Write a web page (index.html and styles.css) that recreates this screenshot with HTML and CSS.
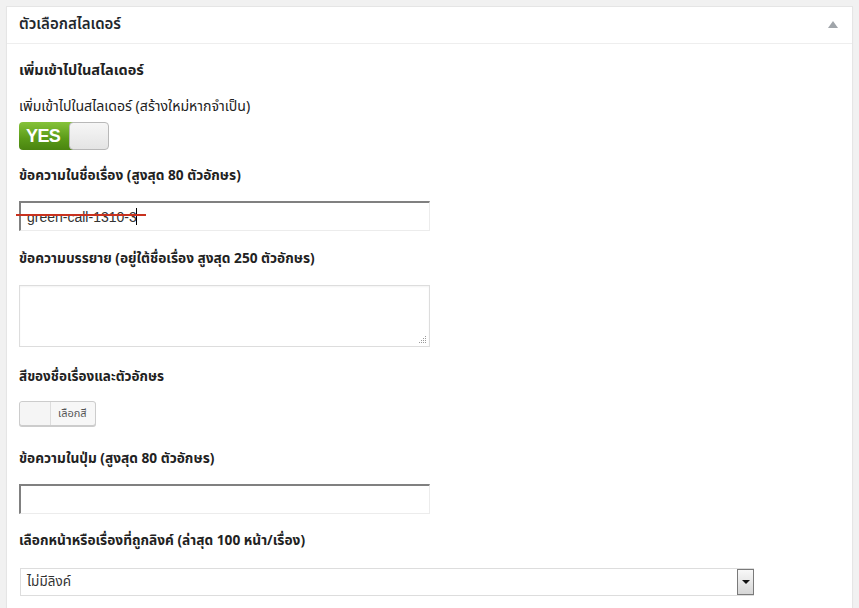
FILE: index.html
```html
<!DOCTYPE html>
<html lang="th">
<head>
<meta charset="utf-8">
<title>ตัวเลือกสไลเดอร์</title>
<link rel="stylesheet" href="styles.css">
</head>
<body>
<div class="panel">
  <div class="panel-head">
    <h2 class="panel-title">ตัวเลือกสไลเดอร์</h2>
    <span class="collapse-arrow"></span>
  </div>
  <div class="panel-body">
    <h3 class="section-title big">เพิ่มเข้าไปในสไลเดอร์</h3>
    <div class="label plain l1">เพิ่มเข้าไปในสไลเดอร์ (สร้างใหม่หากจำเป็น)</div>
    <div class="toggle">
      <span class="toggle-on">YES</span>
      <span class="toggle-handle"></span>
    </div>
    <div class="label l2">ข้อความในชื่อเรื่อง (สูงสุด 80 ตัวอักษร)</div>
    <div class="field-wrap">
      <div class="text-input"><span class="value">green-call-1310-3</span><span class="caret"></span></div>
      <span class="strike"></span>
    </div>
    <div class="label l3">ข้อความบรรยาย (อยู่ใต้ชื่อเรื่อง สูงสุด 250 ตัวอักษร)</div>
    <div class="textarea">
      <svg class="grip" width="8" height="8" viewBox="0 0 8 8"><g fill="#9a9a9a"><rect x="6" y="0" width="1" height="1"/><rect x="4" y="2" width="1" height="1"/><rect x="6" y="2" width="1" height="1"/><rect x="2" y="4" width="1" height="1"/><rect x="4" y="4" width="1" height="1"/><rect x="6" y="4" width="1" height="1"/><rect x="0" y="6" width="1" height="1"/><rect x="2" y="6" width="1" height="1"/><rect x="4" y="6" width="1" height="1"/><rect x="6" y="6" width="1" height="1"/></g></svg>
    </div>
    <h3 class="section-title l4">สีของชื่อเรื่องและตัวอักษร</h3>
    <div class="color-btn"><span class="swatch"></span><span class="color-text">เลือกสี</span></div>
    <div class="label l5">ข้อความในปุ่ม (สูงสุด 80 ตัวอักษร)</div>
    <div class="text-input empty"></div>
    <div class="label l6">เลือกหน้าหรือเรื่องที่ถูกลิงค์ (ล่าสุด 100 หน้า/เรื่อง)</div>
    <div class="select">
      <span class="select-text">ไม่มีลิงค์</span>
      <span class="select-btn"><span class="down"></span></span>
    </div>
  </div>
</div>
</body>
</html>
```
FILE: styles.css
```css
* { box-sizing: border-box; }
html, body { margin: 0; padding: 0; }
body {
  background: #f1f1f1;
  font-family: Tahoma, "Noto Sans Thai", "Liberation Sans", "DejaVu Sans", sans-serif;
  color: #222;
  width: 859px;
  height: 608px;
  overflow: hidden;
}
.panel {
  margin: 6px 0 0 6px;
  width: 847px;
  height: 640px;
  background: #fff;
  border: 1px solid #e5e5e5;
  box-shadow: 0 1px 1px rgba(0,0,0,0.04);
}
.panel-head {
  height: 37px;
  border-bottom: 1px solid #eee;
  display: flex;
  align-items: center;
  justify-content: space-between;
  padding: 0 14px 0 12px;
}
.panel-title {
  margin: 0;
  font-size: 15px;
  font-weight: 600;
  color: #23282d;
  line-height: 20px;
}
.collapse-arrow {
  width: 0; height: 0;
  border-left: 5px solid transparent;
  border-right: 5px solid transparent;
  border-bottom: 7px solid #a0a5aa;
  margin-top: -2px;
}
.panel-body {
  padding: 17px 12px 0 12px;
  display: flex;
  flex-direction: column;
  align-items: flex-start;
}
.section-title {
  margin: 0;
  font-size: 13.5px;
  font-weight: bold;
  line-height: 20px;
  color: #222;
}
.section-title.big { font-size: 14.5px; }
.label {
  font-size: 13.7px;
  font-weight: bold;
  line-height: 20px;
  color: #222;
}
.label.plain { font-weight: normal; font-size: 14.1px; }
.l1 { margin-top: 16px; }
.toggle {
  margin-top: 5px;
  width: 90px;
  height: 28px;
  display: flex;
  position: relative;
  border-radius: 4px;
}
.toggle-on {
  width: 54px;
  height: 28px;
  background: linear-gradient(#86c33a, #5a9a18 60%, #4a8410);
  border-radius: 4px 0 0 4px;
  color: #fff;
  font-family: "Liberation Sans", Arial, sans-serif;
  font-weight: bold;
  font-size: 18px;
  line-height: 28px;
  padding-left: 7px;
  letter-spacing: -0.6px;
}
.toggle-handle {
  width: 40px;
  height: 28px;
  margin-left: -4px;
  background: linear-gradient(#f6f6f6, #e4e4e4);
  border: 1px solid #b8b8b8;
  border-radius: 4px;
}
.l2 { margin-top: 16px; }
.field-wrap { position: relative; margin-top: 15px; }
.text-input {
  width: 411px;
  height: 30px;
  border-top: 2px solid #808080;
  border-left: 2px solid #808080;
  border-right: 1px solid #ececec;
  border-bottom: 1px solid #ececec;
  background: #fff;
  display: flex;
  align-items: center;
  padding-left: 6px;
  font-family: "Liberation Sans", Arial, sans-serif;
  font-size: 14px;
  color: #333;
}
.caret {
  width: 1px;
  height: 17px;
  background: #000;
  margin-left: -1px;
}
.strike {
  position: absolute;
  left: -3px;
  top: 13px;
  width: 130px;
  height: 2px;
  background: #c8321f;
}
.l3 { margin-top: 18px; }
.textarea {
  margin-top: 16px;
  width: 411px;
  height: 62px;
  border: 1px solid #ddd;
  box-shadow: inset 0 1px 2px rgba(0,0,0,0.05);
  position: relative;
}
.grip { position: absolute; right: 2px; bottom: 2px; }
.l4 { margin-top: 20px; }
.color-btn {
  margin-top: 14px;
  width: 77px;
  height: 25px;
  border: 1px solid #ccc;
  border-radius: 3px;
  display: flex;
  background: #f7f7f7;
  box-shadow: 0 1px 0 #ccc;
}
.swatch {
  width: 31px;
  height: 100%;
  background: #f5f5f5;
  border-right: 1px solid #ddd;
  border-radius: 3px 0 0 3px;
}
.color-text {
  font-size: 11px;
  line-height: 23px;
  padding-left: 7px;
  color: #555;
}
.l5 { margin-top: 23px; }
.text-input.empty { margin-top: 15px; }
.l6 { margin-top: 17px; }
.select {
  margin-top: 17px;
  margin-left: 1px;
  width: 734px;
  height: 28px;
  border: 1px solid #ddd;
  display: flex;
  align-items: center;
  justify-content: space-between;
  padding-left: 6px;
}
.select-text {
  font-size: 13.5px;
  color: #333;
}
.select-btn {
  width: 17px;
  height: 26px;
  border: 1px solid #7a7a7a;
  background: linear-gradient(#f8f8f8, #d6d6d6);
  display: flex;
  align-items: center;
  justify-content: center;
  margin-right: -1px;
}
.down {
  width: 0; height: 0;
  border-left: 4px solid transparent;
  border-right: 4px solid transparent;
  border-top: 4px solid #111;
}
```
